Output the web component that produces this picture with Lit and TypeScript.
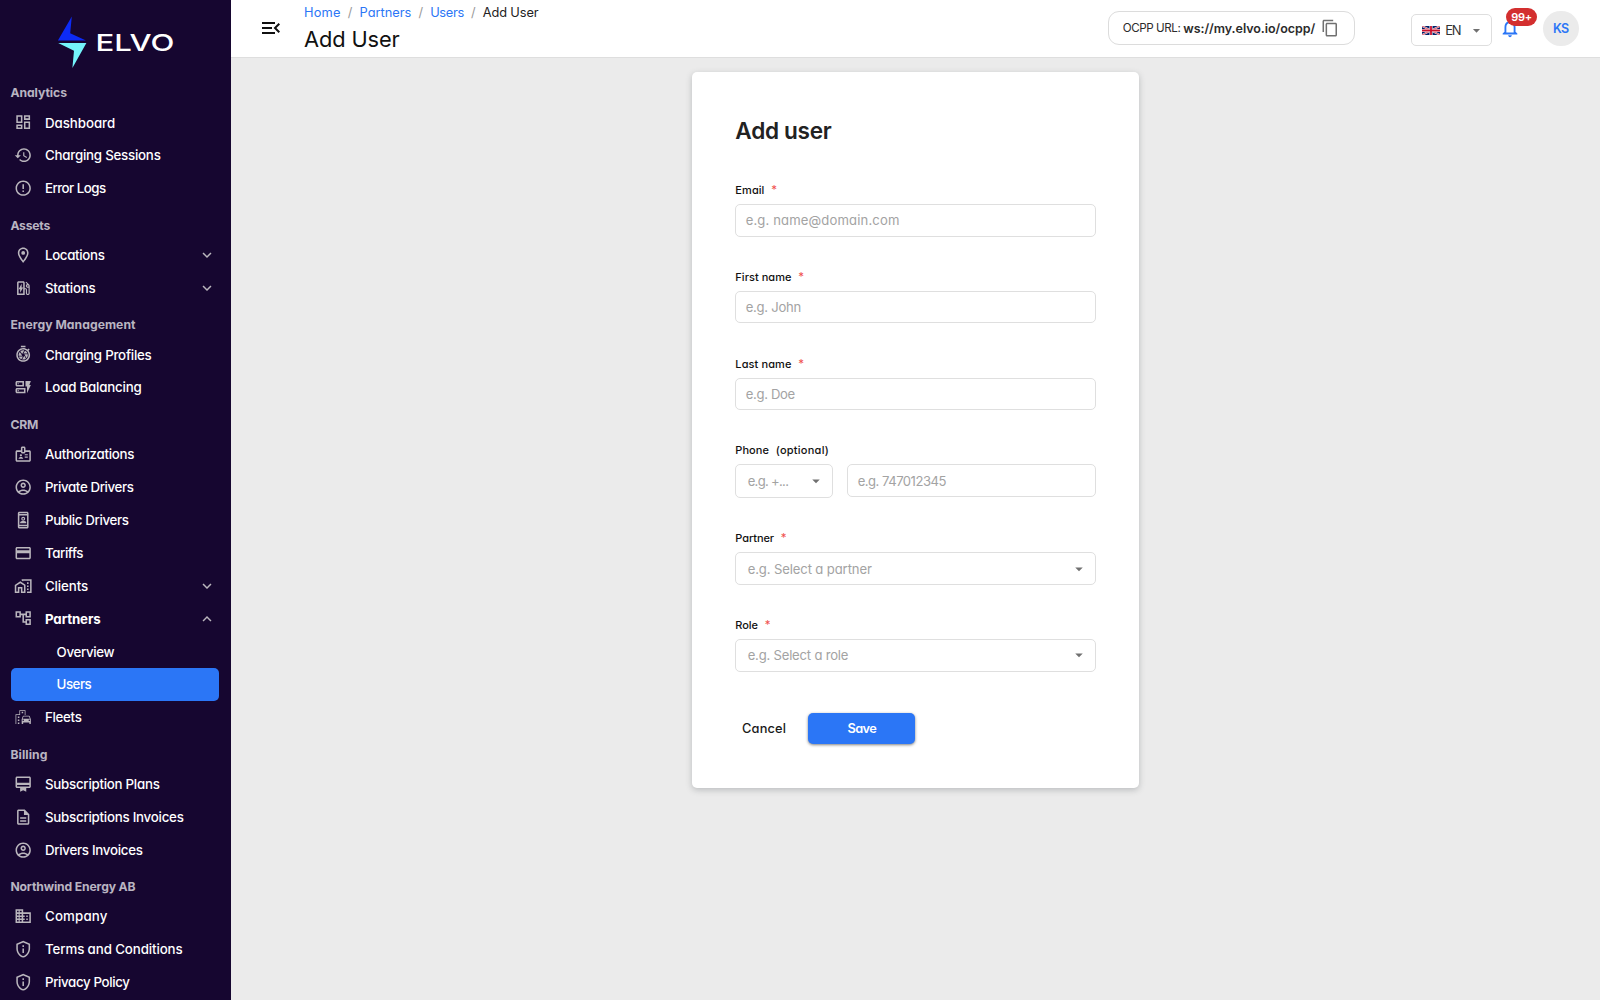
import { LitElement, html, css, svg, nothing } from "lit";
import { customElement, property } from "lit/decorators.js";

const ICONS: Record<string, string> = {
  dashboard: "M19 5v2h-4V5h4M9 5v6H5V5h4m10 8v6h-4v-6h4M9 17v2H5v-2h4M21 3h-8v6h8V3zM11 3H3v10h8V3zm10 8h-8v10h8V11zm-10 4H3v6h8v-6z",
  history: "M13 3c-4.97 0-9 4.03-9 9H1l3.89 3.89.07.14L9 12H6c0-3.87 3.13-7 7-7s7 3.13 7 7-3.13 7-7 7c-1.93 0-3.68-.79-4.94-2.06l-1.42 1.42C8.27 19.99 10.51 21 13 21c4.97 0 9-4.03 9-9s-4.03-9-9-9zm-1 5v5l4.28 2.54.72-1.21-3.5-2.08V8H12z",
  error: "M11 15h2v2h-2zm0-8h2v6h-2zm.99-5C6.47 2 2 6.48 2 12s4.47 10 9.99 10C17.52 22 22 17.52 22 12S17.52 2 11.99 2zM12 20c-4.42 0-8-3.58-8-8s3.58-8 8-8 8 3.58 8 8-3.58 8-8 8z",
  pin: "M12 2C8.13 2 5 5.13 5 9c0 5.25 7 13 7 13s7-7.75 7-13c0-3.87-3.13-7-7-7zM7 9c0-2.76 2.24-5 5-5s5 2.24 5 5c0 2.88-2.88 7.19-5 9.88C9.92 16.21 7 11.85 7 9zM12 6.5a2.5 2.5 0 1 0 0 5a2.5 2.5 0 1 0 0-5z",
  station: "M19.77 7.23l.01-.01-3.72-3.72L15 4.56l2.11 2.11c-.94.36-1.61 1.26-1.61 2.33 0 1.38 1.12 2.5 2.5 2.5.36 0 .69-.08 1-.21v7.21c0 .55-.45 1-1 1s-1-.45-1-1V14c0-1.1-.9-2-2-2h-1V5c0-1.1-.9-2-2-2H6c-1.1 0-2 .9-2 2v16h10v-7.5h1.5v5c0 1.38 1.12 2.5 2.5 2.5s2.5-1.12 2.5-2.5V9c0-.69-.28-1.32-.73-1.77zM12 19H6V5h6v14zm6-9c-.55 0-1-.45-1-1s.45-1 1-1 1 .45 1 1-.45 1-1 1zM8 18v-4.5H6L10 6v5h2l-4 7z",
  shutter: "M15 1H9v2h6V1zm4.03 6.39l1.42-1.42c-.43-.51-.9-.99-1.41-1.41l-1.42 1.42C16.07 4.74 14.12 4 12 4c-4.97 0-9 4.03-9 9s4.02 9 9 9c4.97 0 9-4.03 9-9 0-2.12-.74-4.07-1.97-5.61zM12 20c-3.87 0-7-3.13-7-7s3.13-7 7-7 7 3.13 7 7-3.13 7-7 7zm-.32-5H6.35c.57 1.62 1.82 2.92 3.41 3.56l-.11-.06 2.03-3.5zm5.97-4c-.57-1.6-1.78-2.89-3.34-3.54L12.26 11h5.39zm-7.04 7.83c.45.11.91.17 1.39.17 1.34 0 2.57-.45 3.57-1.19l-2.11-3.9-2.85 4.92zM7.55 8.99C6.59 10.05 6 11.46 6 13c0 .34.04.67.09 1h4.72L7.55 8.99zm8.79 8.14C17.37 16.06 18 14.6 18 13c0-.34-.04-.67-.09-1h-4.34l2.77 5.13zm-3.01-9.98C12.9 7.06 12.46 7 12 7c-1.4 0-2.69.49-3.71 1.29l2.32 3.56 2.72-4.7z",
  balance: "M13 4H4c-1.1 0-2 .9-2 2v3c0 1.1.9 2 2 2h9zM11 9H4V6h7zM15 13H4c-1.1 0-2 .9-2 2v3c0 1.1.9 2 2 2h11zM13 18H4v-3h9zM15 4h7l-2 5h2l-5 11v-9h-2zM4.800 6.800h1.400v1.400H4.800zM4.800 15.800h1.400v1.400H4.800z",
  badge: "M20 7h-5V4c0-1.1-.9-2-2-2h-2c-1.1 0-2 .9-2 2v3H4c-1.1 0-2 .9-2 2v11c0 1.1.9 2 2 2h16c1.1 0 2-.9 2-2V9c0-1.1-.9-2-2-2zm-9-3h2v5h-2V4zm9 16H4V9h5c0 1.1.9 2 2 2h2c1.1 0 2-.9 2-2h5v11zM9 12a1.5 1.5 0 1 0 0 3a1.5 1.5 0 1 0 0-3zM11.08 16.18C10.44 15.9 9.74 15.75 9 15.75s-1.44.15-2.08.43c-.56.23-.92.78-.92 1.39V18h6v-.43c0-.61-.36-1.16-.92-1.39zM14 15h4v1.5h-4zM14 12h4v1.5h-4z",
  account: "M12 2C6.48 2 2 6.48 2 12s4.48 10 10 10 10-4.48 10-10S17.52 2 12 2zM7.35 18.5C8.66 17.56 10.26 17 12 17s3.34.56 4.65 1.5c-1.31.94-2.91 1.5-4.65 1.5s-3.34-.56-4.65-1.5zm10.79-1.38C16.45 15.8 14.32 15 12 15s-4.45.8-6.14 2.12C4.7 15.73 4 13.95 4 12c0-4.42 3.58-8 8-8s8 3.58 8 8c0 1.95-.7 3.73-1.86 5.12zM12 6c-1.93 0-3.5 1.57-3.5 3.5S10.07 13 12 13s3.5-1.57 3.5-3.5S13.93 6 12 6zm0 5c-.83 0-1.5-.67-1.5-1.5S11.17 8 12 8s1.5.67 1.5 1.5S12.83 11 12 11z",
  remember: "M17 1H7c-1.1 0-2 .9-2 2v18c0 1.1.9 2 2 2h10c1.1 0 2-.9 2-2V3c0-1.1-.9-2-2-2zm0 20H7v-1h10v1zm0-3H7V6h10v12zm0-14H7V3h10v1zM12 7.5a2.6 2.6 0 1 0 0 5.2a2.6 2.6 0 1 0 0-5.2zm0 1.5a1.1 1.1 0 1 1 0 2.2a1.1 1.1 0 1 1 0-2.2zM8 16v-1c0-1.3 2.3-1.9 4-1.9s4 .6 4 1.9v1z",
  card: "M20 4H4c-1.11 0-1.99.89-1.99 2L2 18c0 1.11.89 2 2 2h16c1.11 0 2-.89 2-2V6c0-1.11-.89-2-2-2zm0 14H4v-6h16v6zm0-10H4V6h16v2z",
  homework: "M17 15h2v2h-2zM17 11h2v2h-2zM17 7h2v2h-2zM10 3v1.51l2 1.33V5h9v14h-4v2h6V3zM8.17 5.7L15 10.25V21H9v-6H7v6H1V10.48zM11 19h2v-7.84L8.17 8.09L3 11.38V19h2v-6h6z",
  tree: "M22 11V3h-7v3H9V3H2v8h7V8h2v10h4v3h7v-8h-7v3h-2V8h2v3h7zM7 9H4V5h3v4zm10 6h3v4h-3v-4zm0-10h3v4h-3V5z",
  fleet: "M20.57 10.66c-.14-.4-.52-.66-.97-.66h-7.19c-.46 0-.83.26-.98.66L10 14.77l.01 5.51c0 .38.31.72.69.72h.62c.38 0 .68-.38.68-.76V19h8v1.24c0 .38.31.76.69.76h.61c.38 0 .69-.34.69-.72l.01-1.37v-4.14l-1.43-4.11zm-8.16.34h7.19l1.03 3h-9.25l1.03-3zM12 17c-.55 0-1-.45-1-1s.45-1 1-1 1 .45 1 1-.45 1-1 1zm8 0c-.55 0-1-.45-1-1s.45-1 1-1 1 .45 1 1-.45 1-1 1zM14 9h1V3H7v5H2v13h1V9h5V4h6zM5 11h2v2H5zM10 5h2v2h-2zM5 15h2v2H5zM5 19h2v2H5z",
  membership: "M20 2H4c-1.11 0-2 .89-2 2v11c0 1.11.89 2 2 2h4v5l4-2 4 2v-5h4c1.11 0 2-.89 2-2V4c0-1.11-.89-2-2-2zm0 13H4v-2h16v2zm0-5H4V4h16v6z",
  document: "M8 16h8v2H8zm0-4h8v2H8zm6-10H6c-1.1 0-2 .9-2 2v16c0 1.1.89 2 1.99 2H18c1.1 0 2-.9 2-2V8l-6-6zm4 18H6V4h7v5h5v11z",
  business: "M12 7V3H2v18h20V7H12zM6 19H4v-2h2v2zm0-4H4v-2h2v2zm0-4H4V9h2v2zm0-4H4V5h2v2zm4 12H7.500v-2H10v2zm0-4H7.500v-2H10v2zm0-4H7.500V9H10v2zm0-4H7.500V5H10v2zm10 12h-8v-2h2v-2h-2v-2h2v-2h-2V9h8v10zm-2-8h-2v2h2v-2zm0 4h-2v2h2v-2z",
  privacy: "M12 1L3 5v6c0 5.55 3.84 10.74 9 12 5.16-1.26 9-6.45 9-12V5l-9-4zm7 10c0 4.52-2.98 8.69-7 9.93-4.02-1.24-7-5.41-7-9.93V6.3l7-3.11 7 3.11V11zM11 7h2v2h-2zM11 11h2v6h-2z",
  menuOpen: "M3 18h13v-2H3v2zm0-5h10v-2H3v2zm0-7v2h13V6H3zm18 9.59L17.42 12 21 8.41 19.59 7l-5 5 5 5L21 15.59z",
  copy: "M16 1H4c-1.1 0-2 .9-2 2v14h2V3h12V1zm3 4H8c-1.1 0-2 .9-2 2v14c0 1.1.9 2 2 2h11c1.1 0 2-.9 2-2V7c0-1.1-.9-2-2-2zm0 16H8V7h11v14z",
  bell: "M12 22c1.1 0 2-.9 2-2h-4c0 1.1.9 2 2 2zm6-6v-5c0-3.07-1.63-5.64-4.5-6.32V4c0-.83-.67-1.5-1.5-1.5s-1.5.67-1.5 1.5v.68C7.64 5.36 6 7.92 6 11v5l-2 2v1h16v-1l-2-2zm-2 1H8v-6c0-2.48 1.51-4.5 4-4.5s4 2.02 4 4.5v6z",
  down: "M16.59 8.59 12 13.17 7.41 8.59 6 10l6 6 6-6z",
  up: "M12 8l-6 6 1.41 1.41L12 10.83l4.59 4.58L18 14z",
  caret: "M7 10l5 5 5-5z",
};

const icon = (name: string) =>
  html`<svg class="icon" viewBox="0 0 24 24" fill="currentColor" fill-rule="evenodd">${svg`<path d=${ICONS[name]}></path>`}</svg>`;

/** One line of text tracked so that it sets to a given measure in pixels. */
@customElement("fit-text")
class FitText extends LitElement {
  @property() text = "";
  @property({ type: Number }) measure = 0;

  static styles = css`
    :host { display: inline-block; white-space: pre; }
    .line { display: inline-block; }
  `;

  protected updated() {
    const line = this.renderRoot.querySelector<HTMLElement>(".line")!;
    line.style.letterSpacing = "0px";
    const natural = line.getBoundingClientRect().width;
    const gap = (this.measure + 0.6 - natural) / this.text.length;
    line.style.letterSpacing = `${gap.toFixed(3)}px`;
  }

  render() {
    return html`<span class="line">${this.text}</span>`;
  }
}

const fit = (text: string, measure: number) =>
  html`<fit-text .text=${text} .measure=${measure}></fit-text>`;

interface Item {
  label: string;
  w: number;
  icon?: string;
  open?: boolean;
  expandable?: boolean;
  active?: boolean;
}
interface Section {
  title: string;
  w: number;
  items: Item[];
}

const SECTIONS: Section[] = [
  { title: "Analytics", w: 56, items: [
    { label: "Dashboard", w: 69.5, icon: "dashboard" },
    { label: "Charging Sessions", w: 115, icon: "history" },
    { label: "Error Logs", w: 60, icon: "error" },
  ] },
  { title: "Assets", w: 39, items: [
    { label: "Locations", w: 59, icon: "pin", expandable: true },
    { label: "Stations", w: 50, icon: "station", expandable: true },
  ] },
  { title: "Energy Management", w: 124.5, items: [
    { label: "Charging Profiles", w: 106, icon: "shutter" },
    { label: "Load Balancing", w: 96, icon: "balance" },
  ] },
  { title: "CRM", w: 27, items: [
    { label: "Authorizations", w: 88.5, icon: "badge" },
    { label: "Private Drivers", w: 88, icon: "account" },
    { label: "Public Drivers", w: 83, icon: "remember" },
    { label: "Tariffs", w: 37.5, icon: "card" },
    { label: "Clients", w: 42.5, icon: "homework", expandable: true },
    { label: "Partners", w: 55, icon: "tree", expandable: true, open: true },
    { label: "Overview", w: 57 },
    { label: "Users", w: 34, active: true },
    { label: "Fleets", w: 36, icon: "fleet" },
  ] },
  { title: "Billing", w: 36.5, items: [
    { label: "Subscription Plans", w: 114, icon: "membership" },
    { label: "Subscriptions Invoices", w: 138, icon: "document" },
    { label: "Drivers Invoices", w: 97, icon: "account" },
  ] },
  { title: "Northwind Energy AB", w: 124.5, items: [
    { label: "Company", w: 62, icon: "business" },
    { label: "Terms and Conditions", w: 137, icon: "privacy" },
    { label: "Privacy Policy", w: 84, icon: "privacy" },
  ] },
];

@customElement("side-nav")
class SideNav extends LitElement {
  static styles = css`
    :host { display: block; background: #160630; color: #fff; overflow: hidden; }
    .brand { display: flex; height: 72.3px; padding-left: 57px; }
    .logo { width: 118px; height: 72px; }
    .wordmark { font-family: Inter, sans-serif; font-size: 23.4px; font-weight: 500; }
    .title {
      height: 33.8px; padding: 4px 0 0 10.4px; box-sizing: border-box; line-height: 33px;
      color: #b9b4c1; font-size: 12.2px; font-weight: 700;
    }
    .row {
      display: flex; align-items: center; height: 32.9px; margin: 0 11.8px 0 10.7px;
      padding: 0 3.2px 0 3.3px; box-sizing: border-box; border-radius: 5px;
      font-size: 13.3px; font-weight: 500; color: #fff;
    }
    .row .icon { width: 18.4px; height: 18.4px; color: #bab6bd; flex: none; }
    .label { flex: 1; padding-left: 12.6px; }
    .row .chevron { display: flex; }
    .row .chevron .icon { width: 18px; height: 18px; }
    .sub .label { padding-left: 42.6px; }
    .open { font-weight: 700; }
    .active { background: #2b76f6; }
  `;

  render() {
    return html`
      <div class="brand">
        <svg class="logo" viewBox="57 0 118 72">
          <path d="M71.8 16.5L70.2 33.3L86 40.6H57.9z" fill="#0d2bf5"></path>
          <path d="M58.2 43H86.4L72.4 68L74 50.8z" fill="#74f4fb"></path>
          <text class="wordmark" x="95.4" y="50.5" fill="#fff" textLength="79" lengthAdjust="spacingAndGlyphs">ELVO</text>
        </svg>
      </div>
      ${SECTIONS.map((s) => html`
        <div class="title">${fit(s.title, s.w)}</div>
        ${s.items.map((i) => html`
          <div class="row ${i.icon ? "" : "sub"} ${i.open ? "open" : ""} ${i.active ? "active" : ""}">
            ${i.icon ? icon(i.icon) : nothing}
            <span class="label">${fit(i.label, i.w)}</span>
            ${i.expandable ? html`<span class="chevron">${icon(i.open ? "up" : "down")}</span>` : nothing}
          </div>`)}
      `)}
    `;
  }
}

@customElement("top-bar")
class TopBar extends LitElement {
  static styles = css`
    :host {
      display: flex; height: 58px; box-sizing: border-box; background: #fff;
      border-bottom: 1px solid #dedede; padding-left: 28px;
    }
    .menu { width: 24px; height: 24px; margin-top: 16.4px; color: #111; }
    .menu .icon { width: 24px; height: 24px; display: block; }
    .heading { flex: 1; padding-left: 21px; }
    .crumbs { display: flex; height: 26px; line-height: 25px; font-size: 12.8px; color: #2b76f6; }
    .slash { width: 19px; text-align: center; color: #9a9a9a; }
    .current { color: #222; }
    .name { height: 26px; line-height: 26px; font-size: 21.8px; color: #111; }
    .ocpp {
      display: flex; align-items: center; width: 247.5px; height: 34px; margin-top: 11px;
      box-sizing: border-box; border: 1px solid #dcdcdc; border-radius: 11px; padding-left: 14px;
      font-size: 11.6px; color: #2b2b2b; margin-right: 56px;
    }
    .ocpp .key { width: 60.5px; }
    .ocpp .value { font-weight: 600; width: 138px; font-size: 12.5px; }
    .ocpp .icon { width: 18.3px; height: 18.3px; color: #707070; }
    .lang {
      display: flex; align-items: center; width: 80.5px; height: 32px; margin-top: 14px;
      box-sizing: border-box; border: 1px solid #dedede; border-radius: 5px; padding-left: 9.5px;
      font-size: 13px; color: #333;
    }
    .flag { width: 18px; height: 9px; margin-right: 5.5px; }
    .lang .icon { width: 17px; height: 17px; color: #707070; margin-left: 7.5px; }
    .bell { position: relative; width: 22px; height: 22px; margin: 17px 0 0 7.6px; color: #2b76f6; }
    .bell .icon { width: 22px; height: 22px; display: block; }
    .count {
      position: absolute; left: 6.6px; top: -9px; width: 31.5px; height: 18px; border-radius: 9px;
      background: #d32f2f; color: #fff; font-size: 11px; font-weight: 600; line-height: 18px; text-align: center;
    }
    .avatar {
      width: 35.5px; height: 35.5px; margin: 10.5px 21.5px 0 21.7px; border-radius: 50%;
      background: #ebebeb; color: #2b76f6; font-size: 12.5px; font-weight: 600; line-height: 35.5px; text-align: center;
    }
  `;

  render() {
    return html`
      <div class="menu">${icon("menuOpen")}</div>
      <div class="heading">
        <div class="crumbs">
          ${fit("Home", 36)}<span class="slash">/</span>${fit("Partners", 51)}<span class="slash">/</span>${fit("Users", 33)}<span class="slash">/</span>
          <span class="current">${fit("Add User", 55)}</span>
        </div>
        <div class="name">${fit("Add User", 95)}</div>
      </div>
      <div class="ocpp">
        <span class="key">${fit("OCPP URL:", 57)}</span>
        <span class="value">${fit("ws://my.elvo.io/ocpp/", 131.5)}</span>
        ${icon("copy")}
      </div>
      <div class="lang">
        <svg class="flag" viewBox="0 0 60 30" preserveAspectRatio="none">
          <rect width="60" height="30" fill="#012169"></rect>
          <path d="M0 0L60 30M60 0L0 30" stroke="#fff" stroke-width="6"></path>
          <path d="M0 0L60 30M60 0L0 30" stroke="#c8102e" stroke-width="2.5"></path>
          <path d="M30 0V30M0 15H60" stroke="#fff" stroke-width="10"></path>
          <path d="M30 0V30M0 15H60" stroke="#c8102e" stroke-width="6"></path>
        </svg>
        ${fit("EN", 14.5)} ${icon("caret")}
      </div>
      <div class="bell">${icon("bell")}<span class="count">${fit("99+", 20)}</span></div>
      <div class="avatar">${fit("KS", 15)}</div>
    `;
  }
}

@customElement("user-form")
class UserForm extends LitElement {
  static styles = css`
    :host {
      display: block; width: 446.7px; height: 716.3px; box-sizing: border-box; background: #fff;
      border-radius: 5px; padding: 43px; box-shadow: 0 2px 6px rgba(60, 70, 75, 0.28);
    }
    .title { height: 68px; line-height: 31px; font-size: 22.6px; font-weight: 600; color: #222; }
    .field { height: 86.8px; }
    .field.tall { height: 88px; }
    .label { display: flex; gap: 6.8px; height: 21px; line-height: 14px; font-size: 11px; font-weight: 450; color: #111; }
    .star { color: #f0524f; font-size: 11.5px; font-weight: 400; }
    .controls { display: flex; align-items: flex-start; gap: 14px; }
    .box {
      display: flex; align-items: center; justify-content: space-between; flex: 1; height: 32.5px;
      box-sizing: border-box; border: 1px solid #dfdfdf; border-radius: 5px; padding: 0 9.3px;
      color: #a3a3a3; font-size: 13.1px;
    }
    .select { padding: 0 7px 0 11.3px; }
    .code { flex: none; width: 98px; height: 33.5px; }
    .box .icon { width: 18px; height: 18px; color: #707070; }
    .actions { display: flex; align-items: center; height: 31px; padding-left: 6.6px; margin-top: 8px; font-size: 12.8px; font-weight: 500; color: #1a1a1a; }
    .cancel { width: 66.4px; }
    .save {
      width: 107px; height: 31px; line-height: 31px; border-radius: 5px; background: #2b76f6; color: #fff;
      font-weight: 600; text-align: center; box-shadow: 0 1px 3px rgba(0, 0, 0, 0.5);
    }
  `;

  private label(text: string, w: number) {
    return html`<div class="label">${fit(text, w)}<span class="star">*</span></div>`;
  }

  private input(label: string, lw: number, hint: string, hw: number) {
    return html`<div class="field">${this.label(label, lw)}
      <div class="controls"><div class="box">${fit(hint, hw)}</div></div></div>`;
  }

  private select(label: string, lw: number, hint: string, hw: number) {
    return html`<div class="field">${this.label(label, lw)}
      <div class="controls"><div class="box select">${fit(hint, hw)}${icon("caret")}</div></div></div>`;
  }

  render() {
    return html`
      <div class="title">${fit("Add user", 95.5)}</div>
      ${this.input("Email", 28.5, "e.g. name@domain.com", 153.3)}
      ${this.input("First name", 55.5, "e.g. John", 54.7)}
      ${this.input("Last name", 55.5, "e.g. Doe", 48.7)}
      <div class="field tall">
        <div class="label">${fit("Phone", 33)}${fit("(optional)", 52.7)}</div>
        <div class="controls">
          <div class="box select code">${fit("e.g. +...", 40)}${icon("caret")}</div>
          <div class="box">${fit("e.g. 747012345", 87.7)}</div>
        </div>
      </div>
      ${this.select("Partner", 38, "e.g. Select a partner", 123.5)}
      ${this.select("Role", 22, "e.g. Select a role", 100)}
      <div class="actions">
        <span class="cancel">${fit("Cancel", 43.7)}</span>
        <span class="save">${fit("Save", 28.3)}</span>
      </div>
    `;
  }
}

@customElement("app-root")
class AppRoot extends LitElement {
  static styles = css`
    :host {
      display: grid; grid-template-columns: 231px 1fr; height: 1000px; overflow: hidden; background: #ebebeb;
      font-family: Inter, "Liberation Sans", sans-serif; font-feature-settings: "cv11";
    }
    .body { display: flex; justify-content: center; padding: 14px 0 0 0.4px; }
  `;

  render() {
    return html`
      <side-nav></side-nav>
      <main>
        <top-bar></top-bar>
        <div class="body"><user-form></user-form></div>
      </main>
    `;
  }
}
